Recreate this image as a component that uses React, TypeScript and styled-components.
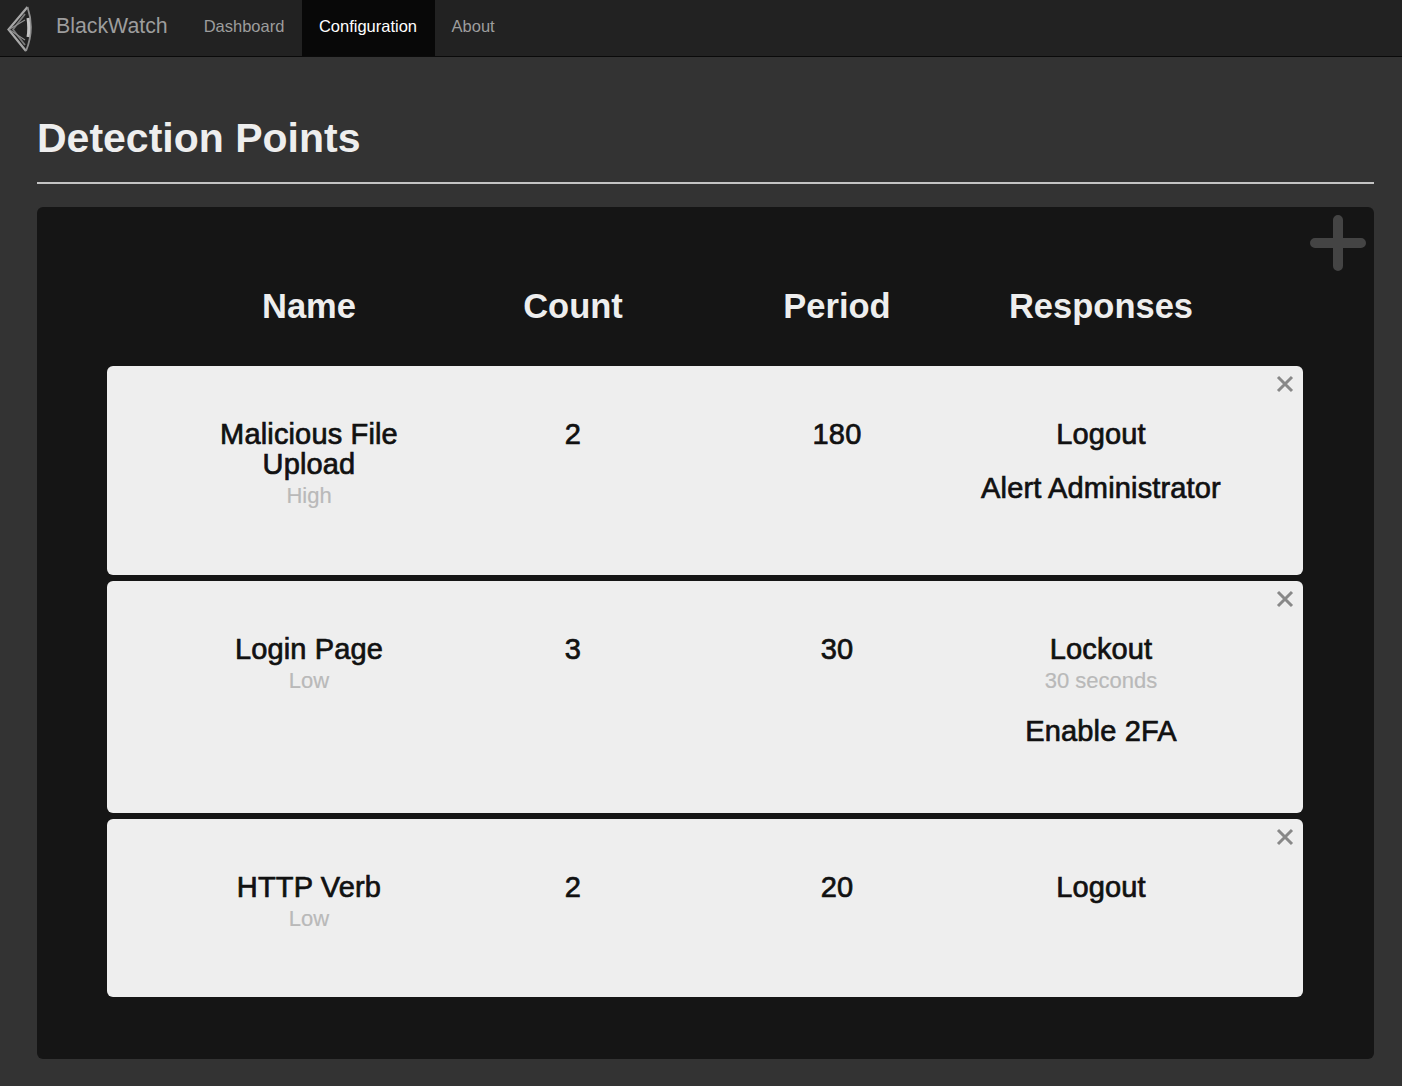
import React from "react";
import styled, { createGlobalStyle } from "styled-components";

const GlobalStyle = createGlobalStyle`
  html, body {
    margin: 0;
    padding: 0;
    background: #333333;
    font-family: "Liberation Sans", Arial, sans-serif;
  }
`;

type Response = { label: string; detail?: string };
type Point = {
  name: string;
  severity: string;
  count: number;
  period: number;
  responses: Response[];
  height: number;
};

const points: Point[] = [
  {
    name: "Malicious File Upload",
    severity: "High",
    count: 2,
    period: 180,
    responses: [{ label: "Logout" }, { label: "Alert Administrator" }],
    height: 209,
  },
  {
    name: "Login Page",
    severity: "Low",
    count: 3,
    period: 30,
    responses: [{ label: "Lockout", detail: "30 seconds" }, { label: "Enable 2FA" }],
    height: 232,
  },
  {
    name: "HTTP Verb",
    severity: "Low",
    count: 2,
    period: 20,
    responses: [{ label: "Logout" }],
    height: 178,
  },
];

export default function App() {
  return (
    <>
      <GlobalStyle />
      <NavBar>
        <Logo width="34" height="50" viewBox="0 0 34 50" fill="none">
          <path d="M27.5 4 L8.5 26.5 L26 48" stroke="#a8a8a8" strokeWidth="2.2" />
          <path d="M27.5 4 Q35 26 26 48" stroke="#8e8e8e" strokeWidth="1.8" />
          <path d="M25 11 L13 26.5 L25 42" stroke="#7c7c7c" strokeWidth="1.8" />
          <path d="M9 26.5 L25 17 M9 26.5 L25 37" stroke="#909090" strokeWidth="1.2" />
          <path d="M28 15 Q29.5 26 28 34" stroke="#c4c4c4" strokeWidth="3" />
        </Logo>
        <Brand>BlackWatch</Brand>
        <NavLink>Dashboard</NavLink>
        <NavLink $active>Configuration</NavLink>
        <NavLink>About</NavLink>
      </NavBar>
      <Page>
        <Title>Detection Points</Title>
        <Rule />
        <Panel>
          <AddIcon width="56" height="56" viewBox="0 0 56 56">
            <path d="M5 28 H51 M28 5 V51" stroke="#444444" strokeWidth="10" strokeLinecap="round" />
          </AddIcon>
          <HeaderRow>
            <HeaderCell>Name</HeaderCell>
            <HeaderCell>Count</HeaderCell>
            <HeaderCell>Period</HeaderCell>
            <HeaderCell>Responses</HeaderCell>
          </HeaderRow>
          <CardList>
            {points.map((point) => (
              <Card key={point.name} $height={point.height}>
                <CloseIcon width="18" height="18" viewBox="0 0 18 18">
                  <path d="M2 2 L16 16 M16 2 L2 16" stroke="#888888" strokeWidth="3" />
                </CloseIcon>
                <Cell>
                  <MainText>{point.name}</MainText>
                  <SubText>{point.severity}</SubText>
                </Cell>
                <Cell>
                  <MainText>{point.count}</MainText>
                </Cell>
                <Cell>
                  <MainText>{point.period}</MainText>
                </Cell>
                <Cell>
                  {point.responses.map((response) => (
                    <ResponseItem key={response.label}>
                      <MainText>{response.label}</MainText>
                      {response.detail && <SubText>{response.detail}</SubText>}
                    </ResponseItem>
                  ))}
                </Cell>
              </Card>
            ))}
          </CardList>
        </Panel>
      </Page>
    </>
  );
}

const NavBar = styled.nav`
  display: flex;
  align-items: stretch;
  height: 56px;
  background: #222222;
  border-bottom: 1px solid #0a0a0a;
`;

const Logo = styled.svg`
  align-self: center;
  flex: none;
`;

const Brand = styled.div`
  display: flex;
  align-items: center;
  margin-left: 22px;
  margin-right: 19px;
  padding-bottom: 3px;
  font-size: 21.3px;
  color: #9d9d9d;
`;

const NavLink = styled.a<{ $active?: boolean }>`
  display: flex;
  align-items: center;
  padding: 0 17.5px 3px 17px;
  font-size: 16.5px;
  color: ${(props) => (props.$active ? "#ffffff" : "#9d9d9d")};
  background: ${(props) => (props.$active ? "#080808" : "transparent")};
`;

const Page = styled.main`
  padding: 0 28px 27px 37px;
`;

const Title = styled.h1`
  margin: 0;
  padding-top: 58px;
  font-size: 41px;
  line-height: 46px;
  font-weight: 700;
  color: #eeeeee;
`;

const Rule = styled.hr`
  margin: 21px 0 23px;
  border: 0;
  height: 2px;
  background: #c4c4c4;
`;

const Panel = styled.section`
  position: relative;
  height: 852px;
  padding: 0 71px 0 70px;
  box-sizing: border-box;
  background: #151515;
  border-radius: 6px;
`;

const AddIcon = styled.svg`
  position: absolute;
  top: 8px;
  right: 8px;
`;

const HeaderRow = styled.div`
  display: grid;
  grid-template-columns: repeat(4, 264px);
  justify-content: center;
  padding-top: 78px;
  height: 159px;
  box-sizing: border-box;
`;

const HeaderCell = styled.div`
  text-align: center;
  font-size: 34.5px;
  line-height: 42px;
  font-weight: 700;
  color: #eeeeee;
`;

const CardList = styled.div`
  display: flex;
  flex-direction: column;
  gap: 6px;
`;

const Card = styled.article<{ $height: number }>`
  position: relative;
  display: grid;
  grid-template-columns: repeat(4, 264px);
  justify-content: center;
  align-content: start;
  height: ${(props) => props.$height}px;
  padding-top: 53px;
  box-sizing: border-box;
  background: #eeeeee;
  border-radius: 6px;
`;

const CloseIcon = styled.svg`
  position: absolute;
  top: 9px;
  right: 9px;
`;

const Cell = styled.div`
  text-align: center;
  padding: 0 40px;
`;

const MainText = styled.div`
  font-size: 29px;
  line-height: 30px;
  font-weight: 400;
  letter-spacing: 0.15px;
  color: #111111;
  -webkit-text-stroke: 0.7px #111111;
`;

const SubText = styled.div`
  margin: 5px 0 -1px;
  font-size: 22px;
  line-height: 24px;
  color: #b9b9b9;
  -webkit-text-stroke: 0.2px #b9b9b9;
`;

const ResponseItem = styled.div`
  margin: 0 -30px 24px;
  white-space: nowrap;
`;
